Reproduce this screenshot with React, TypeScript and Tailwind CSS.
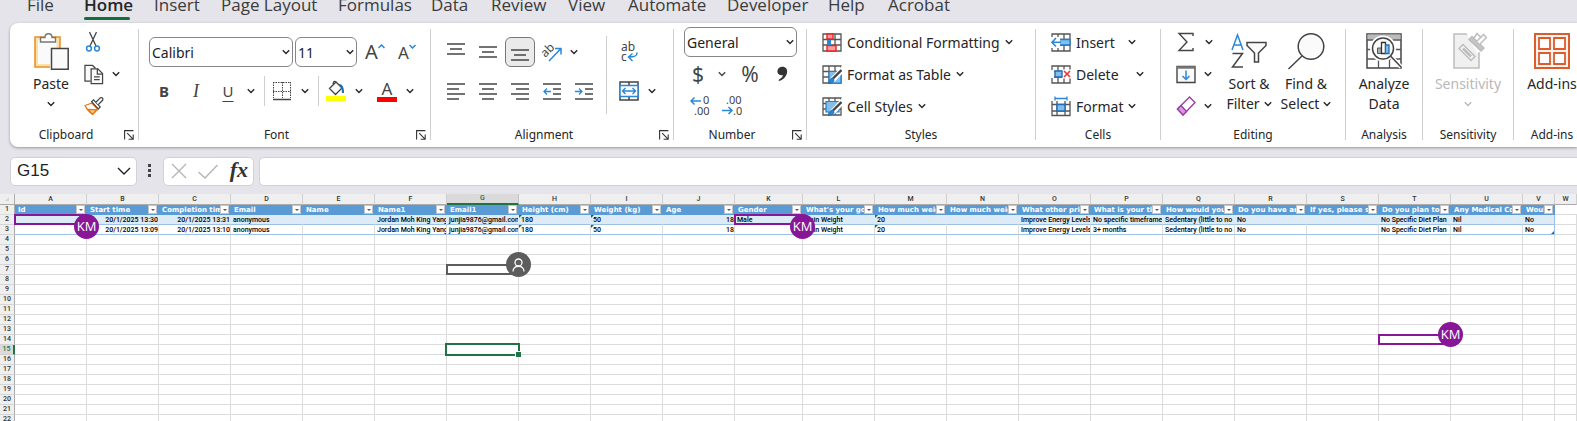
import React from "react";

type Kids = { children: React.ReactNode };

const Chev = ({ big = false }: { big?: boolean }) => (
  <svg width={big ? 14 : 8} height={big ? 8 : 6} viewBox={big ? "0 0 14 8" : "0 0 8 6"} fill="none" stroke="currentColor" strokeWidth="1.4" className="shrink-0">
    <path d={big ? "M1 1l6 6 6-6" : "M.8 1.2L4 4.4l3.2-3.2"} />
  </svg>
);

const Btn = ({ label, width = "w-8", children }: Kids & { label: string; width?: string }) => (
  <button aria-label={label} className={`flex h-full shrink-0 items-center justify-center ${width}`}>
    {children}
  </button>
);

const Drop = ({ label, width = "w-[14px]" }: { label: string; width?: string }) => (
  <Btn label={label} width={width}>
    <Chev />
  </Btn>
);

const Combo = ({ label, value, width }: { label: string; value: string; width: string }) => (
  <div className={`relative h-[30px] shrink-0 ${width}`}>
    <select aria-label={label} className="h-full w-full appearance-none rounded-md border border-[#868686] bg-white pl-[2px] text-[14px] text-[#222]">
      <option>{value}</option>
    </select>
    <span className="pointer-events-none absolute inset-y-0 right-[3px] flex items-center">
      <Chev />
    </span>
  </div>
);

const Launcher = ({ label }: { label: string }) => (
  <button aria-label={label} className="absolute top-2 right-[4px]">
    <svg width="10" height="10" viewBox="0 0 10 10" fill="none" stroke="#333" strokeWidth="1.1">
      <path d="M.6 9.5V.6h8.8M3.2 3.2l5.6 5.6M9.2 4.6v4.6H4.6" />
    </svg>
  </button>
);

const Group = ({ name, width, launcher = false, children }: Kids & { name: string; width: string; launcher?: boolean }) => (
  <section aria-label={name} className={`flex shrink-0 flex-col ${width}`}>
    <div className="h-24">{children}</div>
    <div className={`relative flex h-[25px] items-center justify-center text-[12px] ${launcher ? "pr-4" : ""}`}>
      {name}
      {launcher && <Launcher label={`${name} settings`} />}
    </div>
  </section>
);

const Sep = () => <div className="mt-[3px] h-[111px] w-px shrink-0 bg-[#cfcfcf]" />;
const MiniSep = () => <div className="mr-px ml-[6px] h-[30px] w-px shrink-0 bg-[#cfcfcf]" />;

const Lines = ({ rows, children }: { rows: number[][]; children?: React.ReactNode }) => (
  <svg width="18" height="18" viewBox="0 0 18 18" fill="none" stroke="#444" strokeWidth="1.3">
    {rows.map(([x1, x2, y]) => (
      <path key={y} d={`M${x1} ${y}H${x2}`} />
    ))}
    {children}
  </svg>
);

const PasteIcon = () => (
  <svg width="36" height="38" viewBox="0 0 36 38" fill="none">
    <path d="M2 5h25v30H2z" fill="#fde0a6" stroke="#e8912d" strokeWidth="1.6" />
    <path d="M5 8h18.500v24H5z" fill="#fafafa" />
    <path d="M7.500 10V5.500h4.500c0-5 7-5 7 0h3.500V10z" fill="#fff" stroke="#777" strokeWidth="1.400" />
    <path d="M17 14.500h3V37h-3z" fill="#fff" />
    <path d="M18.500 16.500h16.700v20.800H18.500z" fill="#fafafa" stroke="#444" strokeWidth="1.500" />
  </svg>
);
const CutIcon = () => (
  <svg width="16" height="22" viewBox="0 0 16 22" fill="none" strokeWidth="1.3">
    <path d="M4.500 1l6.500 14M11.500 1L5 15" stroke="#444" />
    <circle cx="4" cy="17.500" r="2.400" stroke="#2b88d8" strokeWidth="1.500" />
    <circle cx="12" cy="17.500" r="2.400" stroke="#2b88d8" strokeWidth="1.500" />
  </svg>
);
const CopyIcon = () => (
  <svg width="21" height="21" viewBox="0 0 21 21" fill="#fafafa" stroke="#444" strokeWidth="1.3">
    <path d="M7 17.500H1V1h8l3 3" />
    <path d="M7.500 4.500h7l5 5V20h-12z" />
    <path d="M14 4.500V10h5.500M10.500 13h6M10.500 16h6" fill="none" />
  </svg>
);
const PainterIcon = () => (
  <svg width="21" height="20" viewBox="0 0 21 20" fill="none" strokeWidth="1.3">
    <path d="M1 9.500l7-2.500 6.500 6.500L9 19c-3-2-6-5.500-8-9.500z" fill="#fff" stroke="#e8771a" />
    <path d="M4 13.500l9.500.5L9 18.500z" fill="#fdc87a" stroke="#e8771a" />
    <path d="M8 5.500l2-2 7 7.500-2 2z" fill="#fff" stroke="#444" />
    <path d="M12.500 6l4.500-4.500c2-1 3.500.5 2.500 2.500L15 8.500" fill="#fff" stroke="#444" />
  </svg>
);
const BorderIcon = () => (
  <svg width="20" height="20" viewBox="0 0 20 20" fill="none" stroke="#444">
    <path d="M1 1.500h18M1 10.500h18M1.500 1v16M10.500 1v16M18.500 1v16" strokeDasharray="1.500 1" />
    <path d="M1 18.500h18" strokeWidth="1.600" />
  </svg>
);
const FillIcon = () => (
  <svg width="20" height="22" viewBox="0 0 20 22" fill="none">
    <path d="M3.500 8.500L10 2l6 6-6.500 6.500zM10 2c-2-2-4 1-2 3" fill="#fafafa" stroke="#444" strokeWidth="1.300" />
    <path d="M13 5c3 0 4 3 4 8" stroke="#1f6fb5" strokeWidth="2.200" />
    <path d="M0 16h20v5H0z" fill="#ff0" />
  </svg>
);
const OrientIcon = () => (
  <svg width="22" height="22" viewBox="0 0 22 22" fill="none">
    <text x="3" y="16" transform="rotate(-45 5 15)" fontSize="12" fill="#444">ab</text>
    <path d="M8 20L20 7.500M14 7.500h6v6" stroke="#2b88d8" strokeWidth="1.500" />
  </svg>
);
const WrapIcon = () => (
  <svg width="20" height="22" viewBox="0 0 20 22" fill="none">
    <text x="2" y="10" fontSize="12" fill="#444">ab</text>
    <text x="2" y="20" fontSize="12" fill="#444">c</text>
    <path d="M18 11.500v.5c0 3-2 4-8 4M13.500 12.500L9.500 16l4 4" stroke="#2b88d8" strokeWidth="1.500" />
  </svg>
);
const MergeIcon = () => (
  <svg width="20" height="20" viewBox="0 0 20 20" fill="none">
    <path d="M1 1h18v18H1zM10 1v18" fill="#fff" stroke="#444" strokeWidth="1.500" />
    <path d="M1 4.500h18v11H1z" fill="#fff" stroke="#2b88d8" strokeWidth="1.500" />
    <path d="M3.500 10h13M6.500 7l-3 3 3 3M13.500 7l3 3-3 3" stroke="#2b88d8" strokeWidth="1.400" />
  </svg>
);
const DecimalIcon = ({ less = false }: { less?: boolean }) => (
  <svg width="20" height="22" viewBox="0 0 20 22" fill="none">
    <text x={less ? 4 : 13} y="9" fontSize="11" fill="#444">{less ? ".00" : "0"}</text>
    <text x={less ? 11 : 4} y="20" fontSize="11" fill="#444">{less ? ".0" : ".00"}</text>
    <path d={less ? "M0 15.500h10M6.500 12l3.500 3.500L6.500 19" : "M1 6h10M4.500 2.500L1 6l3.500 3.500"} stroke="#2b88d8" strokeWidth="1.500" />
  </svg>
);

const GridBase = () => <path d="M1 1h18v17H1zM1 6.500h18M1 12h18M7 1v17M13 1v17" fill="#fff" stroke="#555" strokeWidth="1.300" />;
const Brush = () => (
  <g>
    <path d="M19.500 3L10 13l2.500 2.500L19.500 8z" fill="#fff" stroke="#fff" strokeWidth="2" />
    <path d="M19.500 5L11 13.500" stroke="#444" strokeWidth="2.400" />
    <path d="M6 18.500c2 0 1-4 4-5.500 3 1 3 5-4 5.500z" fill="#2b88d8" stroke="#1f6fb5" />
  </g>
);
const CondIcon = () => (
  <svg width="20" height="19" viewBox="0 0 20 19" fill="none">
    <GridBase />
    <path d="M5 1h6v5H5zM5 12.500h9V18H5z" fill="#f8a0a0" stroke="#e22" strokeWidth="1.400" />
    <path d="M5 7h4v5H5z" fill="#2b88d8" />
  </svg>
);
const TableIcon = () => (
  <svg width="20" height="19" viewBox="0 0 20 19" fill="none">
    <GridBase />
    <path d="M7 6.500h12V18H7z" fill="#83beec" stroke="#1f7fd0" strokeWidth="1.200" />
    <Brush />
  </svg>
);
const CellStyleIcon = () => (
  <svg width="20" height="19" viewBox="0 0 20 19" fill="none">
    <GridBase />
    <path d="M4 4.500h13V15H4z" fill="#83beec" stroke="#1f7fd0" strokeWidth="1.200" />
    <Brush />
  </svg>
);
const InsertIcon = () => (
  <svg width="20" height="19" viewBox="0 0 20 19" fill="none">
    <GridBase />
    <path d="M8 6.500h11V12H8z" fill="#83beec" stroke="#1f7fd0" strokeWidth="1.300" />
    <path d="M0 4h9v11H0z" fill="#fff" />
    <path d="M1 9.300h9M5 5L1 9.300l4 4.200" stroke="#2b88d8" strokeWidth="1.600" />
  </svg>
);
const DeleteIcon = () => (
  <svg width="20" height="19" viewBox="0 0 20 19" fill="none">
    <GridBase />
    <path d="M0 5h3v8H0zM11 4.500h9v9h-9z" fill="#fff" />
    <path d="M4 6h7v6H4z" fill="#83beec" stroke="#1f6fb5" strokeWidth="1.400" />
    <path d="M13 6l6 6M19 6l-6 6" stroke="#e33" strokeWidth="1.600" />
  </svg>
);
const FormatIcon = () => (
  <svg width="20" height="21" viewBox="0 0 20 21" fill="none">
    <path d="M1 5v14.500h18V5M1 8.500h18M1 15h18M6 5v14.500M14 5v14.500" stroke="#555" strokeWidth="1.300" />
    <path d="M6 8.500h8V15H6z" fill="#83beec" stroke="#1f6fb5" strokeWidth="1.400" />
    <path d="M4 2.500h12M4 .500v4M16 .500v4" stroke="#2b88d8" strokeWidth="1.300" />
  </svg>
);
const SumIcon = () => (
  <svg width="18" height="20" viewBox="0 0 18 20" fill="none" stroke="#444" strokeWidth="1.400">
    <path d="M16 4V1.500H2L10 10l-8 8.500h14V16" />
  </svg>
);
const FillDownIcon = () => (
  <svg width="20" height="19" viewBox="0 0 20 19" fill="none">
    <path d="M1 1.500h18v16H1z" fill="#fafafa" stroke="#444" strokeWidth="1.400" />
    <path d="M1 2.500h18" stroke="#777" strokeWidth="2.400" />
    <path d="M10 5.500v9M6.500 11l3.500 3.500 3.500-3.500" stroke="#2b88d8" strokeWidth="1.500" />
  </svg>
);
const EraserIcon = () => (
  <svg width="20" height="20" viewBox="0 0 20 20" strokeWidth="1.400">
    <path d="M13.500 1l5.500 5.500L7 19l-5.500-6z" fill="#fff" stroke="#9b3fa5" />
    <path d="M5 9.500l5.500 6L7 19l-5.500-6z" fill="#d79add" stroke="#9b3fa5" />
  </svg>
);
const SortIcon = () => (
  <svg width="38" height="38" viewBox="0 0 38 38" fill="none" strokeWidth="1.500">
    <path d="M2 18L7.500 3 13 18M4 13h7" stroke="#2b88d8" />
    <path d="M2.500 21.500h10L2.500 35h10.500" stroke="#444" />
    <path d="M17 10.500h19v3l-7.500 7.500v9h-4v-9L17 13.500z" fill="#fafafa" stroke="#444" />
  </svg>
);
const FindIcon = () => (
  <svg width="38" height="38" viewBox="0 0 38 38" stroke="#444" strokeWidth="1.500">
    <circle cx="24" cy="14.500" r="12.800" fill="#fafafa" />
    <path d="M15 24L1.500 37" />
  </svg>
);
const AnalyzeIcon = () => (
  <svg width="38" height="38" viewBox="0 0 38 38" fill="none">
    <path d="M2 2h34v34H2z" fill="#fff" stroke="#444" strokeWidth="1.500" />
    <path d="M2.500 2.500h33v5h-33z" fill="#bbb" />
    <path d="M2 8h34M2 17.500h34M2 27h34M13.500 27v9M24.500 27v9" stroke="#555" strokeWidth="1.300" />
    <circle cx="18" cy="16.500" r="13" fill="#fff" />
    <path d="M25.500 24L36 35" stroke="#fff" strokeWidth="4" />
    <circle cx="18" cy="16.500" r="10.500" fill="#fafafa" stroke="#444" strokeWidth="1.500" />
    <path d="M25.500 24L36 35" stroke="#444" strokeWidth="1.500" />
    <path d="M12.500 16h4v5.500h-4z" fill="#aaa" stroke="#555" />
    <path d="M16.500 10.500h4v11h-4z" fill="#fff" stroke="#333" strokeWidth="1.300" />
    <path d="M20.500 13h3.500v8.500h-3.500z" fill="#83beec" stroke="#1f6fb5" strokeWidth="1.300" />
  </svg>
);
const SensitivityIcon = () => (
  <svg width="38" height="38" viewBox="0 0 38 38" fill="none" stroke="#bdbdbd" strokeWidth="1.500">
    <path d="M5 2h25v34H5z" fill="#f0f0f0" />
    <path d="M17 0h21v17L28 21z" fill="#fff" stroke="none" />
    <path d="M10 16.500l4-4 12 12-4 4z" fill="#f4f4f4" />
    <path d="M14 16.500l8 8" strokeWidth="2.500" />
    <path d="M20 7.500L23 4.500l12 11.500-3 3z" fill="#c4c4c4" />
    <path d="M25 6l3-4.500 4.500 4.500M28 9l6.500-6.500 3 3L31 12" fill="#fff" />
  </svg>
);
const AddinsIcon = () => (
  <svg width="38" height="38" viewBox="0 0 38 38" fill="#fff" stroke="#dc5c2c">
    <path d="M2 2h34v34H2z" strokeWidth="2" fill="#fdf3ee" />
    <path d="M6 6h11v11H6zM21 6h11v11H21zM6 21h11v11H6zM21 21h11v11H21z" strokeWidth="1.800" />
  </svg>
);

const BigButton = ({ icon, lines, drop, width, muted = false }: { icon: React.ReactNode; lines: string[]; drop?: "inline" | "below"; width: string; muted?: boolean }) => (
  <button className={`flex h-full shrink-0 flex-col items-center pt-[6px] text-[14px] leading-5 whitespace-nowrap ${width} ${muted ? "text-[#b8b8b8]" : ""}`}>
    {icon}
    <span className="mt-1 flex flex-col items-center">
      {lines.map((l, i) => (
        <span key={l} className="flex items-center gap-1">
          {l}
          {drop === "inline" && i === lines.length - 1 && <Chev />}
        </span>
      ))}
      {drop === "below" && (
        <span className="flex h-5 items-center">
          <Chev />
        </span>
      )}
    </span>
  </button>
);

const RowButton = ({ icon, text, textWidth = "" }: { icon: React.ReactNode; text: string; textWidth?: string }) => (
  <button className="flex h-8 items-center gap-[5px] text-[14px] whitespace-nowrap">
    <span className="flex w-5 justify-center">{icon}</span>
    <span className={`text-left ${textWidth}`}>{text}</span>
    <Chev />
  </button>
);

const tabs = [
  ["File", "w-[57px]"],
  ["Home", "w-[70px]"],
  ["Insert", "w-[67px]"],
  ["Page Layout", "w-[117px]"],
  ["Formulas", "w-[93px]"],
  ["Data", "w-[60px]"],
  ["Review", "w-[77px]"],
  ["View", "w-[60px]"],
  ["Automate", "w-[99px]"],
  ["Developer", "w-[101px]"],
  ["Help", "w-[60px]"],
  ["Acrobat", "w-[84px]"],
];

const letters = "ABCDEFGHIJKLMNOPQRSTUVW".split("");
const heads: Record<string, string> = {
  A: "Id", B: "Start time", C: "Completion time", D: "Email", E: "Name", F: "Name1", G: "Email1", H: "Height (cm)",
  I: "Weight (kg)", J: "Age", K: "Gender", L: "What's your goal", M: "How much weight", N: "How much weight",
  O: "What other priority", P: "What is your time", Q: "How would you", R: "Do you have any", S: "If yes, please sp",
  T: "Do you plan to", U: "Any Medical Condition", V: "Would",
};
const common = {
  D: "anonymous", F: "Jordan Moh King Yang", G: "junjia9876@gmail.com", H: "180", I: "50", J: "18", L: "Gain Weight",
  M: "20", O: "Improve Energy Levels", Q: "Sedentary (little to no", R: "No", T: "No Specific Diet Plan", U: "Nil", V: "No",
};
const data: Record<number, Record<string, string>> = {
  2: { ...common, B: "20/1/2025 13:30", C: "20/1/2025 13:31", K: "Male", P: "No specific timeframe" },
  3: { ...common, B: "20/1/2025 13:09", C: "20/1/2025 13:10", P: "3+ months" },
};

const Presence = ({ tone, low = false }: { tone: "purple" | "gray"; low?: boolean }) => (
  <>
    <span className={`absolute -inset-px z-10 border-2 ${tone === "purple" ? "border-[#881798]" : "border-[#5d5d5d]"}`} />
    <span
      className={`absolute -right-[13px] z-20 flex size-[25px] items-center justify-center rounded-full font-['Open_Sans',sans-serif] text-[13px] text-white ${low ? "-top-px" : "-top-[13px]"} ${tone === "purple" ? "bg-[#881798]" : "bg-[#5d5d5d]"}`}
    >
      {tone === "purple" ? (
        "KM"
      ) : (
        <svg width="13" height="14" viewBox="0 0 13 14" fill="none" stroke="#fff" strokeWidth="1.3">
          <circle cx="6.500" cy="4.500" r="3.500" />
          <path d="M1 13.500c0-7 11-7 11 0" />
        </svg>
      )}
    </span>
  </>
);

const marks: Record<string, React.ReactNode> = {
  A2: <Presence tone="purple" low />,
  K2: <Presence tone="purple" low />,
  G7: <Presence tone="gray" />,
  T14: <Presence tone="purple" />,
  G15: (
    <>
      <span className="absolute -inset-[2px] z-10 border-2 border-[#217346]" />
      <span className="absolute -right-[3px] -bottom-[3px] z-20 size-[6px] border-t border-l border-white bg-[#217346]" />
    </>
  ),
};

const Cell = ({ col, row }: { col: string; row: number }) => {
  const text = data[row]?.[col] ?? "";
  const inTable = row <= 3 && col !== "W";
  const right = "BCJ".includes(col);
  const tint = inTable && row === 2 ? "bg-[#ddebf7]" : "bg-white";
  const edge = inTable ? "border-b-[#9bc2e6]" : "border-b-[#dcdcdc]";
  const side = inTable && col === "V" ? "border-r-[#9bc2e6]" : inTable && row === 2 ? "border-r-[#ddebf7]" : "border-r-[#dcdcdc]";
  return (
    <td className={`relative h-[10px] border-r border-b p-0 ${tint} ${edge} ${side}`}>
      <div className={`h-[9px] overflow-hidden leading-[10px] whitespace-nowrap ${right ? "text-right" : "pl-[2px]"}`}>{text}</div>
      {text && "HIM".includes(col) && <span className="absolute top-0 left-0 border-t-[3px] border-r-[3px] border-t-[#107c10] border-r-transparent" />}
      {row === 3 && col === "V" && <span className="absolute right-0 bottom-0 border-b-[3px] border-l-[3px] border-b-[#3b5ba5] border-l-transparent" />}
      {marks[`${col}${row}`]}
    </td>
  );
};

export default function App() {
  return (
    <div className="flex h-screen flex-col overflow-hidden bg-[#e4e4ea] font-['Noto_Sans','Open_Sans',sans-serif] text-[#262626]">
      <nav className="flex h-[23px] shrink-0 items-end overflow-hidden pl-[15px] font-['Open_Sans','Noto_Sans',sans-serif]">
        {tabs.map(([t, w]) => (
          <button key={t} className={`flex shrink-0 flex-col px-3 pb-[3px] text-left text-[17px] leading-6 whitespace-nowrap ${w} ${t === "Home" ? "font-semibold" : "text-[#3b3b3b]"}`}>
            {t}
            <span className={`h-[3px] w-full rounded-full ${t === "Home" ? "bg-[#0f703b]" : ""}`} />
          </button>
        ))}
      </nav>

      <div className="ml-[10px] flex h-[124px] shrink-0 overflow-hidden rounded-l-lg bg-white pt-[3px] shadow-[0_1px_3px_rgba(0,0,0,0.35)]">
        <Group name="Clipboard" width="w-32" launcher>
          <div className="flex h-full pl-[13px]">
            <BigButton icon={<PasteIcon />} lines={["Paste"]} drop="below" width="w-14" />
            <div className="flex flex-col pl-[5px]">
              <div className="flex h-8 items-center pl-px"><Btn label="Cut" width="w-4"><CutIcon /></Btn></div>
              <div className="flex h-8 items-center gap-2"><Btn label="Copy" width="w-5"><CopyIcon /></Btn><Drop label="Copy options" width="w-2" /></div>
              <div className="flex h-8 items-center"><Btn label="Format painter" width="w-5"><PainterIcon /></Btn></div>
            </div>
          </div>
        </Group>
        <Sep />
        <Group name="Font" width="w-[291px]" launcher>
          <div className="flex flex-col gap-[7px] pt-[10px]">
            <div className="flex h-8 items-center pl-[10px]">
              <Combo label="Font name" value="Calibri" width="mr-[2px] w-36" />
              <Combo label="Font size" value="11" width="mr-[2px] w-[62px]" />
              <Btn label="Grow font">
                <span className="text-[20px] leading-none text-[#444]">A</span>
                <svg width="7" height="5" viewBox="0 0 7 5" fill="none" stroke="#2b88d8" strokeWidth="1.5" className="mb-3"><path d="M.500 4L3.500 1l3 3" /></svg>
              </Btn>
              <Btn label="Shrink font">
                <span className="text-[17px] leading-none text-[#444]">A</span>
                <svg width="7" height="5" viewBox="0 0 7 5" fill="none" stroke="#2b88d8" strokeWidth="1.5" className="mb-3"><path d="M.500 1l3 3 3-3" /></svg>
              </Btn>
            </div>
            <div className="flex h-8 items-center pl-[9px]">
              <Btn label="Bold"><b className="text-[15px] text-[#444]">B</b></Btn>
              <Btn label="Italic"><i className="font-['Liberation_Serif',serif] text-lg text-[#444]">I</i></Btn>
              <Btn label="Underline"><span className="text-[15px] text-[#444] underline underline-offset-4">U</span></Btn>
              <Drop label="Underline options" />
              <MiniSep />
              <Btn label="Borders"><BorderIcon /></Btn>
              <Drop label="Border options" />
              <MiniSep />
              <Btn label="Fill color"><FillIcon /></Btn>
              <Drop label="Fill options" />
              <div className="w-[5px]" />
              <Btn label="Font color">
                <span className="flex w-5 flex-col items-center border-b-[5px] border-[#f00] text-[17px] leading-4 text-[#444]">A</span>
              </Btn>
              <Drop label="Font color options" />
            </div>
          </div>
        </Group>
        <Sep />
        <Group name="Alignment" width="w-[242px]" launcher>
          <div className="flex pt-[10px] pl-[9px]">
            <div className="flex w-[166px] flex-col gap-[7px]">
              <div className="flex h-8 items-center">
                <Btn label="Top align"><Lines rows={[[0, 18, 1], [3, 15, 6], [0, 18, 11]]} /></Btn>
                <Btn label="Middle align"><Lines rows={[[0, 18, 4], [3, 15, 9], [0, 18, 14]]} /></Btn>
                <Btn label="Bottom align">
                  <span className="flex size-[30px] items-center justify-center rounded-md border border-[#777] bg-[#ebebeb]">
                    <Lines rows={[[0, 18, 7], [3, 15, 12], [0, 18, 17]]} />
                  </span>
                </Btn>
                <Btn label="Orientation"><OrientIcon /></Btn>
                <Drop label="Orientation options" width="w-3" />
              </div>
              <div className="flex h-8 items-center">
                <Btn label="Align left"><Lines rows={[[0, 18, 2], [0, 12, 7], [0, 18, 12], [0, 12, 17]]} /></Btn>
                <Btn label="Align center"><Lines rows={[[0, 18, 2], [3, 15, 7], [0, 18, 12], [3, 15, 17]]} /></Btn>
                <Btn label="Align right"><Lines rows={[[0, 18, 2], [5, 18, 7], [0, 18, 12], [5, 18, 17]]} /></Btn>
                <Btn label="Decrease indent">
                  <Lines rows={[[0, 18, 2], [10, 18, 7], [10, 18, 12], [0, 18, 17]]}><path d="M1 9.500h7M4 6.500l-3 3 3 3" stroke="#2b88d8" /></Lines>
                </Btn>
                <Btn label="Increase indent">
                  <Lines rows={[[0, 18, 2], [10, 18, 7], [10, 18, 12], [0, 18, 17]]}><path d="M0 9.500h7M4 6.500l3 3-3 3" stroke="#2b88d8" /></Lines>
                </Btn>
              </div>
            </div>
            <div className="h-[78px] w-px bg-[#cfcfcf]" />
            <div className="flex flex-col gap-[7px] pl-[6px]">
              <div className="flex h-8 items-center"><Btn label="Wrap text"><WrapIcon /></Btn></div>
              <div className="flex h-8 items-center"><Btn label="Merge and center"><MergeIcon /></Btn><Drop label="Merge options" /></div>
            </div>
          </div>
        </Group>
        <Sep />
        <Group name="Number" width="w-[132px]" launcher>
          <div className="flex flex-col pl-[10px]">
            <div className="flex h-8 items-center"><Combo label="Number format" value="General" width="w-[113px]" /></div>
            <div className="flex h-8 items-center text-[21px] leading-none text-[#444]">
              <Btn label="Accounting format" width="w-7">$</Btn>
              <Drop label="Currency options" width="w-5" />
              <Btn label="Percent style" width="w-9">%</Btn>
              <Btn label="Comma style" width="w-7">
                <svg width="12" height="18" viewBox="0 0 12 18" fill="#333"><path d="M5 2c4-1 7 2 6 6-1 4-4 7-8 8l-.5-1C5 13.500 6.500 12 7 10 3 11 1 8 1.500 5.500 2 3.500 3.500 2 5 2z" /></svg>
              </Btn>
            </div>
            <div className="flex h-8 items-center">
              <Btn label="Increase decimal"><DecimalIcon /></Btn>
              <Btn label="Decrease decimal"><DecimalIcon less /></Btn>
            </div>
          </div>
        </Group>
        <Sep />
        <Group name="Styles" width="w-[228px]">
          <div className="flex flex-col items-start pl-[15px]">
            <RowButton icon={<CondIcon />} text="Conditional Formatting" />
            <RowButton icon={<TableIcon />} text="Format as Table" />
            <RowButton icon={<CellStyleIcon />} text="Cell Styles" />
          </div>
        </Group>
        <Sep />
        <Group name="Cells" width="w-[124px]">
          <div className="flex flex-col items-start pl-[15px]">
            <RowButton icon={<InsertIcon />} text="Insert" textWidth="w-[47px]" />
            <RowButton icon={<DeleteIcon />} text="Delete" textWidth="w-[55px]" />
            <RowButton icon={<FormatIcon />} text="Format" textWidth="w-[47px]" />
          </div>
        </Group>
        <Sep />
        <Group name="Editing" width="w-[184px]">
          <div className="flex h-full pl-[9px]">
            <div className="mr-[6px] flex flex-col">
              <div className="flex h-8"><Btn label="AutoSum"><SumIcon /></Btn><Drop label="Sum options" /></div>
              <div className="flex h-8"><Btn label="Fill"><FillDownIcon /></Btn><Drop label="Fill direction" width="w-3" /></div>
              <div className="flex h-8"><Btn label="Clear"><EraserIcon /></Btn><Drop label="Clear options" width="w-3" /></div>
            </div>
            <BigButton icon={<SortIcon />} lines={["Sort &", "Filter"]} drop="inline" width="w-[54px]" />
            <BigButton icon={<FindIcon />} lines={["Find &", "Select"]} drop="inline" width="w-[60px]" />
          </div>
        </Group>
        <Sep />
        <Group name="Analysis" width="w-[76px]">
          <BigButton icon={<AnalyzeIcon />} lines={["Analyze", "Data"]} width="w-full" />
        </Group>
        <Sep />
        <Group name="Sensitivity" width="w-[90px]">
          <BigButton icon={<SensitivityIcon />} lines={["Sensitivity"]} drop="below" width="w-full" muted />
        </Group>
        <Sep />
        <Group name="Add-ins" width="w-[76px]">
          <BigButton icon={<AddinsIcon />} lines={["Add-ins"]} width="w-full" />
        </Group>
      </div>

      <div className="flex h-[47px] shrink-0 items-center pt-px pl-[10px]">
        <button className="flex h-[29px] w-[127px] items-center justify-between rounded-[5px] border border-[#d2d2d6] bg-white pr-[5px] pl-[6px] font-['Liberation_Sans',sans-serif] text-[17px] text-[#222]">
          G15
          <Chev big />
        </button>
        <svg width="4" height="14" viewBox="0 0 4 14" fill="#444" className="mx-[11px]">
          <path d="M0 0h3v3H0zM0 5h3v3H0zM0 10h3v3H0z" />
        </svg>
        <div className="flex h-[29px] w-[91px] items-center justify-between rounded-[5px] border border-[#d2d2d6] bg-white pr-[5px] pl-[7px]">
          <button aria-label="Cancel">
            <svg width="16" height="16" viewBox="0 0 16 16" stroke="#b5b5b5" strokeWidth="1.4"><path d="M1 1l14 14M15 1L1 15" /></svg>
          </button>
          <button aria-label="Enter">
            <svg width="20" height="15" viewBox="0 0 20 15" fill="none" stroke="#b5b5b5" strokeWidth="1.4"><path d="M.500 8L7 14 19.500 1" /></svg>
          </button>
          <button aria-label="Insert function" className="pb-[3px] font-['Liberation_Serif',serif] text-[22px] leading-none font-semibold text-[#333] italic">fx</button>
        </div>
        <input aria-label="Formula" className="ml-[5px] h-[29px] min-w-0 flex-1 rounded-l-[5px] border border-r-0 border-[#d2d2d6] bg-white px-2" />
      </div>

      <main className="min-h-0 flex-1 overflow-hidden bg-white">
        <table className="w-full table-fixed border-separate border-spacing-0 font-['Roboto','Liberation_Sans',sans-serif] text-[7px] leading-[9px] font-medium text-black">
          <colgroup>
            <col className="w-[15px]" />
            {letters.map((l) => (
              <col key={l} className={l === "K" ? "w-[68px]" : l === "V" ? "w-8" : l === "W" ? "" : "w-[72px]"} />
            ))}
          </colgroup>
          <thead>
            <tr>
              <td className="h-[11px] border-r border-b border-[#ababab] bg-[#efefef] p-0">
                <span className="mx-auto block w-1 border-b-4 border-l-4 border-b-[#d5d5d5] border-l-transparent" />
              </td>
              {letters.map((l) => (
                <th
                  key={l}
                  scope="col"
                  className={`h-[11px] border-r p-0 text-[7px] leading-[9px] font-medium ${l === "G" ? "border-b-2 border-r-[#c4c4c4] border-b-[#217346] bg-[#dadada] text-[#217346]" : "border-b border-r-[#cfcfcf] border-b-[#ababab] bg-[#efefef] text-[#333]"}`}
                >
                  {l}
                </th>
              ))}
            </tr>
          </thead>
          <tbody>
            <tr>
              <th scope="row" className="h-[10px] border-r border-b border-r-[#ababab] border-b-[#dcdcdc] bg-[#efefef] p-0 font-medium text-[#333]">1</th>
              {letters.map((l) =>
                heads[l] ? (
                  <td key={l} className="h-[10px] border-b border-[#5b9bd5] bg-[#5b9bd5] p-0">
                    <div className="flex h-[9px] items-center">
                      <span className="h-[9px] min-w-0 flex-1 overflow-hidden pl-[3px] font-['DejaVu_Sans',sans-serif] leading-[11px] font-bold whitespace-nowrap text-white">{heads[l]}</span>
                      <button aria-label={`Filter ${heads[l]}`} className="mr-[2px] flex size-[9px] shrink-0 items-center justify-center border border-[#c4c4c4] bg-white">
                        <span className="border-x-2 border-t-2 border-x-transparent border-t-[#555]" />
                      </button>
                    </div>
                  </td>
                ) : (
                  <td key={l} className="border-b border-[#dcdcdc] p-0" />
                ),
              )}
            </tr>
            {Array.from({ length: 21 }, (_, i) => i + 2).map((r) => (
              <tr key={r}>
                <th
                  scope="row"
                  className={`h-[10px] p-0 font-medium ${r === 15 ? "border-r-2 border-b border-r-[#217346] border-b-[#cfcfcf] bg-[#dadada] text-[#217346]" : "border-r border-b border-r-[#ababab] border-b-[#d5d5d5] bg-[#efefef] text-[#333]"}`}
                >
                  {r}
                </th>
                {letters.map((l) => (
                  <Cell key={l} col={l} row={r} />
                ))}
              </tr>
            ))}
          </tbody>
        </table>
      </main>
    </div>
  );
}
